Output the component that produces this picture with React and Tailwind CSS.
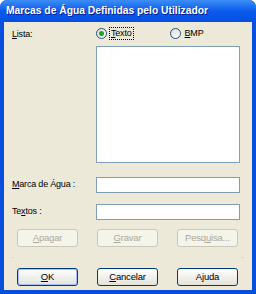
import React from "react";

const U = ({ children }) => <span className="underline underline-offset-[1px]">{children}</span>;

const Radio = ({ checked, children, focused }) => (
  <div className="flex items-center gap-[2px]">
    <div className="w-[11px] h-[11px] rounded-full border border-[#1C5180] bg-gradient-to-br from-[#DCDCD7] to-white flex items-center justify-center">
      {checked && <div className="w-[5px] h-[5px] rounded-full bg-[#21A121]" />}
    </div>
    <span className={focused ? "px-[1px] border border-dotted border-black leading-[11px]" : "px-[1px] border border-transparent leading-[11px]"}>
      {children}
    </span>
  </div>
);

const Btn = ({ children, disabled, isDefault }) => (
  <button
    disabled={disabled}
    className={`w-[61px] h-[18px] rounded-[3px] text-[9.5px] tracking-[-0.2px] leading-none flex items-center justify-center ${
      disabled
        ? "border border-[#C9C7BA] bg-[#F5F4EA] text-[#ACA899]"
        : isDefault
          ? "border border-[#003C74] bg-gradient-to-b from-white to-[#E3E2DA] text-black shadow-[inset_0_0_0_1px_#A8C3F5]"
          : "border border-[#003C74] bg-gradient-to-b from-white to-[#E3E2DA] text-black"
    }`}
  >
    {children}
  </button>
);

export default function App() {
  return (
    <div
      className="w-[256px] h-[294px] flex flex-col bg-[#0A4EE0] rounded-t-[7px] overflow-hidden"
      style={{ fontFamily: '"Liberation Sans", Arial, sans-serif' }}
    >
      <div className="h-[22px] shrink-0 flex items-center pl-[6px] bg-gradient-to-b from-[#3D8EF8] via-[#0A5AEB] to-[#0550E4]">
        <span className="text-white font-bold text-[10.3px] tracking-[0px] [text-shadow:1px_1px_0_#0A1E8C]">
          Marcas de Água Definidas pelo Utilizador
        </span>
      </div>
      <div className="flex-1 mx-[4px] mb-[4px] bg-[#ECE9D8] text-[9px] tracking-[-0.2px] text-black flex flex-col pl-[8px] pr-[12px] pt-[5px]">
        <div className="flex">
          <div className="w-[84px] pt-[1px]">
            <U>L</U>ista:
          </div>
          <div className="flex flex-col w-[144px]">
            <div className="flex gap-[36px] h-[13px] items-center">
              <Radio checked focused>
                <U>T</U>exto
              </Radio>
              <Radio>
                <U>B</U>MP
              </Radio>
            </div>
            <div className="mt-[6px] h-[117px] bg-white border border-[#7F9DB9]" />
          </div>
        </div>
        <div className="flex items-center mt-[14px]">
          <div className="w-[84px]">
            <U>M</U>arca de Água :
          </div>
          <div className="w-[144px] h-[16px] bg-white border border-[#7F9DB9]" />
        </div>
        <div className="flex items-center mt-[11px]">
          <div className="w-[84px]">
            Te<U>x</U>tos :
          </div>
          <div className="w-[144px] h-[16px] bg-white border border-[#7F9DB9]" />
        </div>
        <div className="flex mt-[9px] pl-[5px] gap-[19px]">
          <Btn disabled>
            <U>A</U>pagar
          </Btn>
          <Btn disabled>
            <U>G</U>ravar
          </Btn>
          <Btn disabled>
            Pesq<U>u</U>isa...
          </Btn>
        </div>
        <div className="flex justify-between mt-[10px] h-[1px]">
          <span className="w-[1px] h-[1px] bg-[#C5C2B2]" />
          <span className="w-[1px] h-[1px] bg-[#C5C2B2] mr-[-3px]" />
        </div>
        <div className="flex mt-[10px] pl-[5px] gap-[19px]">
          <Btn isDefault>
            <U>O</U>K
          </Btn>
          <Btn>
            <U>C</U>ancelar
          </Btn>
          <Btn>Ajuda</Btn>
        </div>
      </div>
    </div>
  );
}
